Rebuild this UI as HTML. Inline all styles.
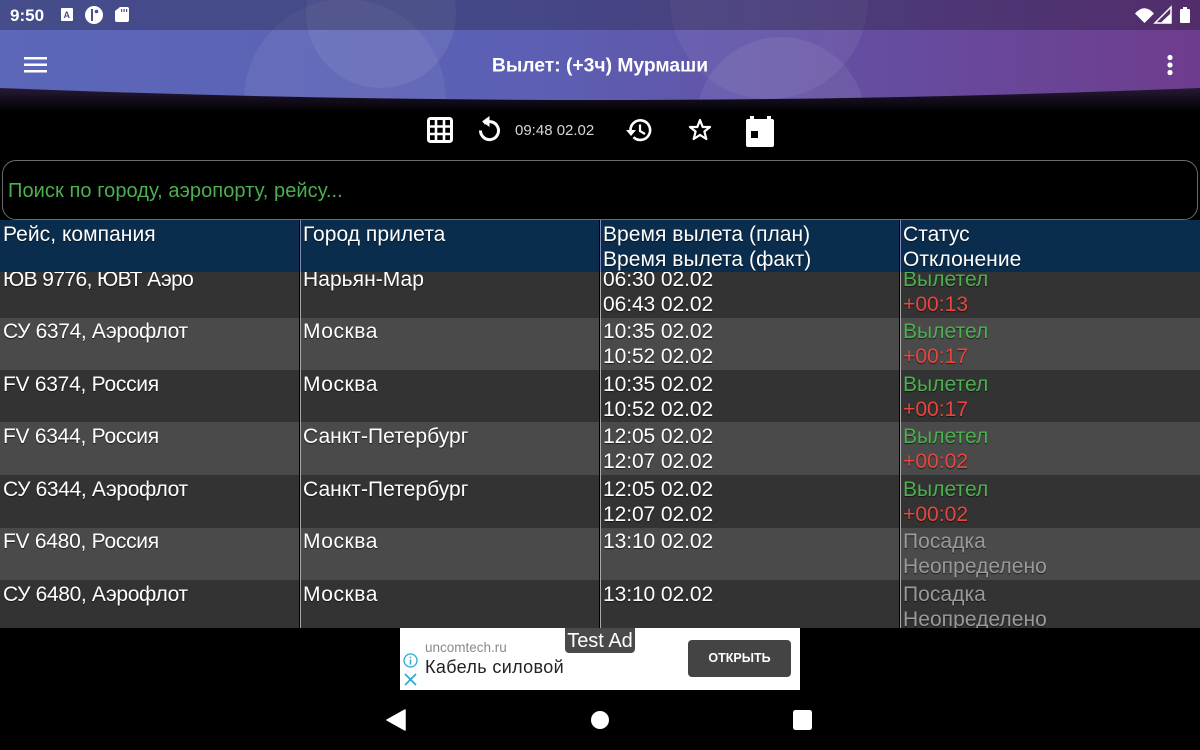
<!DOCTYPE html>
<html><head><meta charset="utf-8"><style>
html,body{margin:0;padding:0;background:#000}
#p{position:relative;width:1200px;height:750px;overflow:hidden;background:#000;font-family:"Liberation Sans",sans-serif}
.r{position:absolute;left:0;width:1200px}
.t{position:absolute;font-size:21px;line-height:25px;white-space:nowrap;color:#fff;letter-spacing:.05px;text-shadow:0 1px 1px rgba(0,0,0,.6)}
.g{color:#4caf50}.d{color:#e8463c}.n{color:#9a9a9a}
.fa{letter-spacing:-.35px}.fb{letter-spacing:-.27px}.fc{letter-spacing:-.6px}.m{letter-spacing:.55px}.c{letter-spacing:-.08px}
.s{position:absolute;top:220px;height:408px;width:1px;background:#aaa}
.k{position:absolute;top:220px;height:408px;width:1px;background:#000}
.sh{position:absolute;top:220px;height:52px;width:2px;background:#7f88b8}
</style></head><body><div id="p">
<svg style="position:absolute;left:0;top:0" width="1200" height="160" viewBox="0 0 1200 160">
<defs>
<linearGradient id="a" x1="0" x2="1" y1="0" y2="0"><stop offset="0" stop-color="#5c67b9"/><stop offset=".45" stop-color="#5c5fb3"/><stop offset="1" stop-color="#6e3c8e"/></linearGradient>
<linearGradient id="b" x1="0" x2="0" y1="0" y2="1"><stop offset="0" stop-color="#2a1c3a"/><stop offset="1" stop-color="#000"/></linearGradient>
<clipPath id="c"><path d="M0 88Q600 112 1200 88V0H0Z"/></clipPath>
</defs>
<rect x="0" y="86" width="1200" height="26" fill="url(#b)"/>
<g clip-path="url(#c)">
<rect width="1200" height="110" fill="url(#a)"/>
<circle cx="345" cy="100" r="101" fill="#fff" fill-opacity=".06"/>
<circle cx="381" cy="13" r="75" fill="#fff" fill-opacity=".07"/>
<circle cx="769" cy="0" r="99" fill="#fff" fill-opacity=".06"/>
<circle cx="781" cy="122" r="85" fill="#fff" fill-opacity=".07"/>
<rect width="1200" height="30" fill="#000" fill-opacity=".25"/>
</g>
<!-- status -->
<text x="10" y="21" font-family="Liberation Sans" font-size="17" font-weight="bold" fill="#fff">9:50</text>
<rect x="61" y="8" width="12" height="13" rx="1" fill="#fff"/>
<text x="63.500" y="18" font-family="Liberation Sans" font-size="9" font-weight="bold" fill="#4a4f8f">A</text>
<circle cx="94" cy="15" r="9" fill="#fff"/><rect x="91" y="9" width="2" height="12" fill="#4a4f8f"/><circle cx="96.500" cy="11.500" r="1.800" fill="#4a4f8f"/>
<path d="M120 7h7a2 2 0 0 1 2 2v11a2 2 0 0 1-2 2h-10a2 2 0 0 1-2-2v-9z" fill="#fff"/><rect x="121" y="9" width="1.200" height="3" fill="#4a4f8f"/><rect x="123.500" y="9" width="1.200" height="3" fill="#4a4f8f"/><rect x="126" y="9" width="1.200" height="3" fill="#4a4f8f"/>
<path d="M1135 13.500Q1144.500 3 1154 13.500L1144.500 23Z" fill="#fff"/>
<path d="M1171 7V23H1155Z" fill="none" stroke="#fff" stroke-width="1.500"/><path d="M1171 13V23H1162V21.500Z" fill="#fff"/>
<rect x="1180" y="9" width="10" height="14" rx="1" fill="#fff"/><rect x="1183" y="7" width="4" height="2" fill="#fff"/>
<!-- app bar -->
<rect x="24" y="57" width="23" height="2.500" fill="#fff"/><rect x="24" y="63.500" width="23" height="2.500" fill="#fff"/><rect x="24" y="70" width="23" height="2.500" fill="#fff"/>
<circle cx="1170" cy="57.500" r="2.600" fill="#fff"/><circle cx="1170" cy="65" r="2.600" fill="#fff"/><circle cx="1170" cy="72.500" r="2.600" fill="#fff"/>
<text x="600" y="71.500" text-anchor="middle" font-family="Liberation Sans" font-size="19.300" font-weight="bold" fill="#fff">Вылет: (+3ч) Мурмаши</text>
<!-- toolbar -->
<g fill="none" stroke="#fff">
<rect x="428.500" y="118.500" width="23" height="23" rx="2" stroke-width="3"/>
<path d="M428 126.500H452M428 134H452M436 118V142M444 118V142" stroke-width="2.600"/>
<path d="M484 123.500a9 9 0 1 1-3.500 7" stroke-width="3"/>
</g>
<path d="M489.500 116V127L482 121.500Z" fill="#fff"/>
<g fill="none" stroke="#fff">
<path d="M630.500 130a9.800 9.800 0 1 1 3 7.200" stroke-width="2.600"/>
<path d="M640 124.500V131L645 134" stroke-width="2.200"/>
<path d="M700 120L702.700 127H710L704.400 131.500 706.300 139 700 134.900 693.700 139 695.600 131.500 690 127H697.300Z" stroke-width="2.200" stroke-linejoin="round"/>
</g>
<path d="M626 130H636L631 136Z" fill="#fff"/>
<path fill="#fff" fill-rule="evenodd" d="M750 116h4v3h13v-3h4v3h1a2 2 0 0 1 2 2v24a2 2 0 0 1-2 2h-24a2 2 0 0 1-2-2v-24a2 2 0 0 1 2-2h2zM751 131v7h7v-7z" />
<text x="515" y="135" font-family="Liberation Sans" font-size="15" fill="#d6d6d6">09:48 02.02</text>
</svg>
<div style="position:absolute;left:2px;top:160px;width:1194px;height:58px;border:1.500px solid #6b6b6b;border-radius:14px"></div>
<div class="t g" style="left:8px;top:179px;font-size:20px;letter-spacing:.08px">Поиск по городу, аэропорту, рейсу...</div>
<div class="r" style="top:220px;height:52px;background:#0b2d4d"></div>
<div class="r" style="top:272px;height:46px;background:#333"></div>
<div class="r" style="top:318px;height:52px;background:#4a4a4a"></div>
<div class="r" style="top:370px;height:52px;background:#333"></div>
<div class="r" style="top:422px;height:53px;background:#4a4a4a"></div>
<div class="r" style="top:475px;height:53px;background:#333"></div>
<div class="r" style="top:528px;height:52px;background:#4a4a4a"></div>
<div class="r" style="top:580px;height:48px;background:#333;overflow:hidden"></div>

<div style="position:absolute;left:0;top:220px;width:1200px;height:408px;overflow:hidden">
<div class="t" style="left:3px;top:2px">Рейс, компания</div><div class="t" style="left:303px;top:2px">Город прилета</div><div class="t" style="left:603px;top:2px">Время вылета (план)<br>Время вылета (факт)</div><div class="t" style="left:903px;top:2px">Статус<br>Отклонение</div>
</div>
<div style="position:absolute;left:0;top:272px;width:1200px;height:356px;overflow:hidden">
<div class="t fc" style="left:3px;top:-5px">ЮВ 9776, ЮВТ Аэро</div><div class="t" style="left:303px;top:-5px">Нарьян-Мар</div><div class="t c" style="left:603px;top:-5px">06:30 02.02<br>06:43 02.02</div><div class="t g" style="left:903px;top:-5px">Вылетел<br><span class="d">+00:13</span></div>
<div class="t fa" style="left:3px;top:47px">СУ 6374, Аэрофлот</div><div class="t m" style="left:303px;top:47px">Москва</div><div class="t c" style="left:603px;top:47px">10:35 02.02<br>10:52 02.02</div><div class="t g" style="left:903px;top:47px">Вылетел<br><span class="d">+00:17</span></div>
<div class="t fb" style="left:3px;top:100px">FV 6374, Россия</div><div class="t m" style="left:303px;top:100px">Москва</div><div class="t c" style="left:603px;top:100px">10:35 02.02<br>10:52 02.02</div><div class="t g" style="left:903px;top:100px">Вылетел<br><span class="d">+00:17</span></div>
<div class="t fb" style="left:3px;top:152px">FV 6344, Россия</div><div class="t" style="left:303px;top:152px">Санкт-Петербург</div><div class="t c" style="left:603px;top:152px">12:05 02.02<br>12:07 02.02</div><div class="t g" style="left:903px;top:152px">Вылетел<br><span class="d">+00:02</span></div>
<div class="t fa" style="left:3px;top:205px">СУ 6344, Аэрофлот</div><div class="t" style="left:303px;top:205px">Санкт-Петербург</div><div class="t c" style="left:603px;top:205px">12:05 02.02<br>12:07 02.02</div><div class="t g" style="left:903px;top:205px">Вылетел<br><span class="d">+00:02</span></div>
<div class="t fb" style="left:3px;top:257px">FV 6480, Россия</div><div class="t m" style="left:303px;top:257px">Москва</div><div class="t c" style="left:603px;top:257px">13:10 02.02</div><div class="t n" style="left:903px;top:257px">Посадка<br>Неопределено</div>
<div class="t fa" style="left:3px;top:310px">СУ 6480, Аэрофлот</div><div class="t m" style="left:303px;top:310px">Москва</div><div class="t c" style="left:603px;top:310px">13:10 02.02</div><div class="t n" style="left:903px;top:310px">Посадка<br>Неопределено</div>
</div>
<div class="k" style="left:299px"></div><div class="s" style="left:300px"></div>
<div class="k" style="left:599px"></div><div class="s" style="left:600px"></div>
<div class="k" style="left:899px"></div><div class="s" style="left:900px"></div>
<div class="sh" style="left:300px;width:1px"></div><div class="sh" style="left:600px;width:1px"></div><div class="sh" style="left:900px;width:1px"></div>

<div style="position:absolute;left:400px;top:628px;width:400px;height:62px;background:#fff"></div>
<div style="position:absolute;left:565px;top:628px;width:70px;height:25px;background:#4a4a4a;border-radius:0 0 4px 4px;color:#fff;font-size:20px;line-height:26px;text-align:center">Test Ad</div>
<div style="position:absolute;left:425px;top:640px;font-size:13.500px;line-height:16px;color:#8a8a8a">uncomtech.ru</div>
<div style="position:absolute;left:425px;top:656px;font-size:18px;line-height:22px;color:#222;letter-spacing:.35px">Кабель силовой</div>
<div style="position:absolute;left:688px;top:640px;width:103px;height:37px;background:#444;border-radius:4px;color:#fff;font-size:12.500px;font-weight:bold;line-height:37px;text-align:center">ОТКРЫТЬ</div>
<svg style="position:absolute;left:400px;top:650px" width="22" height="40" viewBox="0 0 22 40" fill="none" stroke="#2ba9d0">
<circle cx="10.500" cy="10.500" r="6.500" stroke-width="1.300"/><path d="M10.500 9.500V14.500M10.500 6.800V8.200" stroke-width="1.500"/>
<path d="M5 24L16 35M16 24L5 35" stroke-width="1.700"/>
</svg>
<svg style="position:absolute;left:380px;top:705px" width="440" height="30" viewBox="0 0 440 30" fill="#fff">
<path d="M7 15L25 5V25Z" stroke="#fff" stroke-width="1.500" stroke-linejoin="round"/>
<circle cx="220" cy="15" r="9"/>
<rect x="413" y="5" width="19" height="20" rx="2.500"/>
</svg>
</div></body></html>
